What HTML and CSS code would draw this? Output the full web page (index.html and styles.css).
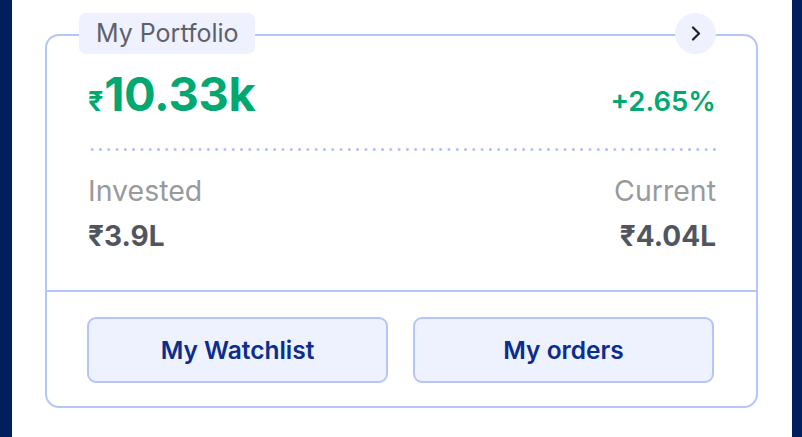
FILE: index.html
```html
<!DOCTYPE html>
<html lang="en">

<head>
  <meta charset="UTF-8" />
  <title>My Portfolio</title>

  <link rel="stylesheet" href="styles.css">
</head>

<body>
  <div class="band band-left"></div>

  <main class="page">
    <section class="card">
      <span class="card-tag">My Portfolio</span>
      <button class="card-more" aria-label="Open portfolio">
        <svg width="10" height="15" viewBox="0 0 10 15">
          <path d="M2 1.5 L8 7.5 L2 13.5" fill="none" stroke="#1f2128" stroke-width="2.2" stroke-linecap="round" stroke-linejoin="round" />
        </svg>
      </button>

      <div class="summary">
        <div class="summary-top">
          <div class="pnl"><span class="pnl-sign">₹</span>10.33k</div>
          <div class="pnl-pct">+2.65%</div>
        </div>

        <div class="dots"></div>

        <div class="summary-stats">
          <div class="stat">
            <div class="stat-label">Invested</div>
            <div class="stat-value">₹3.9L</div>
          </div>
          <div class="stat stat-right">
            <div class="stat-label">Current</div>
            <div class="stat-value">₹4.04L</div>
          </div>
        </div>
      </div>

      <div class="actions">
        <button class="action-btn">My Watchlist</button>
        <button class="action-btn">My orders</button>
      </div>
    </section>
  </main>

  <div class="band band-right"></div>
</body>

</html>
```

FILE: styles.css
```css
html,
body {
  margin: 0;
  height: 100%;
}

body {
  display: flex;
  background: #fff;
  font-family: Inter, "Noto Sans", "Liberation Sans", sans-serif;
}

.band {
  background: #001f5c;
  height: 437px;
}

.band-left {
  width: 12px;
}

.band-right {
  width: 10px;
}

.page {
  flex: 1;
  padding: 34px 34px 0 33px;
}

.card {
  position: relative;
  border: 2px solid #b6c5f7;
  border-radius: 14px;
  height: 370px;
  display: flex;
  flex-direction: column;
}

.card-tag {
  position: absolute;
  top: -23px;
  left: 32px;
  height: 41px;
  width: 176px;
  box-sizing: border-box;
  padding-left: 17px;
  background: #eff1fe;
  border-radius: 7px;
  font-size: 25px;
  line-height: 41px;
  color: #5d616d;
}

.card-more {
  position: absolute;
  top: -23px;
  right: 40px;
  width: 41px;
  height: 41px;
  border: none;
  border-radius: 50%;
  background: #eff1fe;
  padding: 0;
  display: flex;
  align-items: center;
  justify-content: center;
  cursor: pointer;
}

.summary {
  height: 256px;
  box-sizing: border-box;
  padding: 36px 40px 0 41px;
  border-bottom: 2px solid #b6c5f7;
}

.summary-top {
  display: flex;
  justify-content: space-between;
  align-items: baseline;
}

.pnl {
  font-size: 47px;
  line-height: 44px;
  font-weight: 700;
  color: #02a871;
  letter-spacing: -0.3px;
}

.pnl-sign {
  font-size: 27px;
  margin-right: 1px;
}

.pnl-pct {
  font-size: 27.5px;
  font-weight: 600;
  color: #02a871;
}

.dots {
  margin-top: 24px;
  height: 3px;
  background-image: radial-gradient(circle, #a9bcf6 1.2px, transparent 1.5px);
  background-size: 8.3px 3px;
}

.summary-stats {
  display: flex;
  justify-content: space-between;
  margin-top: 26px;
}

.stat-right {
  text-align: right;
}

.stat-label {
  font-size: 28.5px;
  line-height: 28px;
  color: #999a9c;
}

.stat-value {
  margin-top: 17px;
  font-size: 28px;
  line-height: 28px;
  font-weight: 700;
  color: #51555f;
}

.actions {
  display: flex;
  gap: 25px;
  padding: 25px 42px 0 40px;
}

.action-btn {
  flex: 1;
  height: 66px;
  background: #eef1fe;
  border: 2px solid #b6c5f7;
  border-radius: 9px;
  font-family: Inter, "Noto Sans", "Liberation Sans", sans-serif;
  font-size: 24.5px;
  font-weight: 600;
  color: #0b2d8c;
  cursor: pointer;
}
```
